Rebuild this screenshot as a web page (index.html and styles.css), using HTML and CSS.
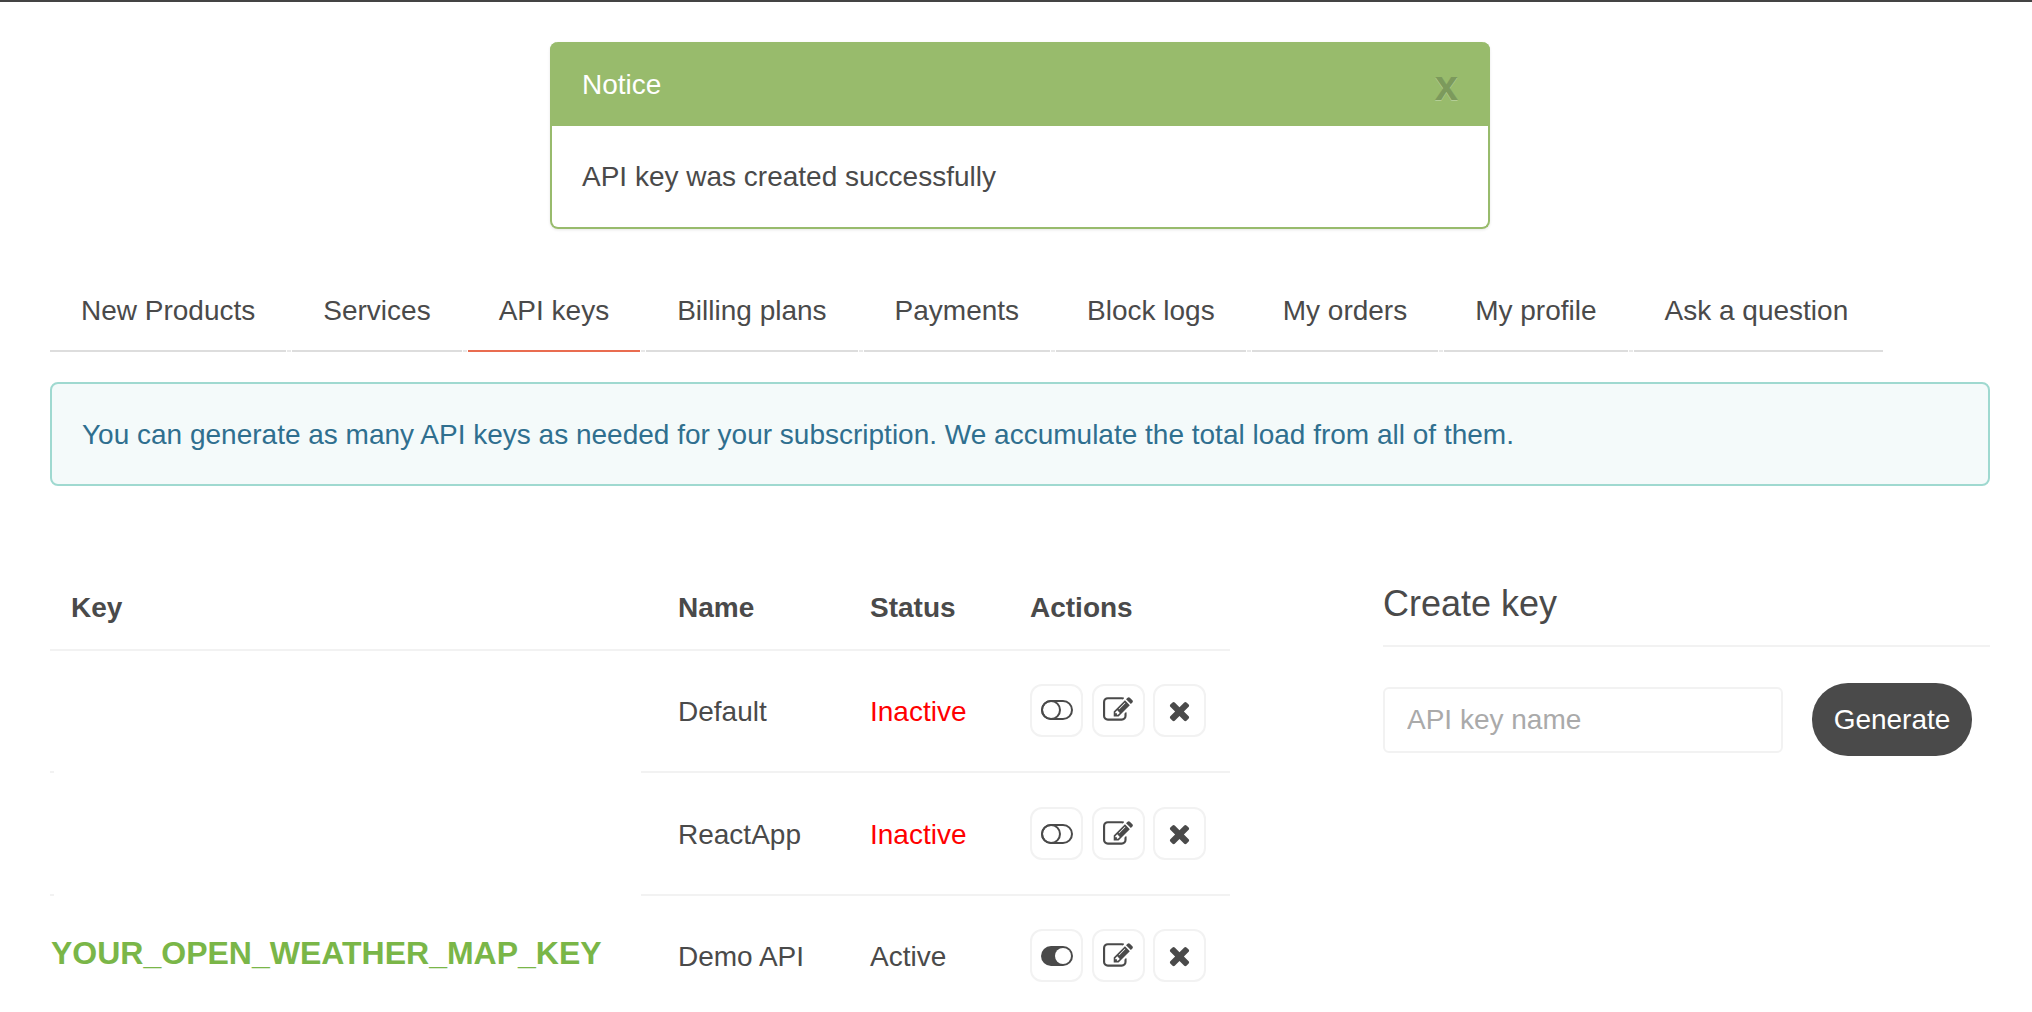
FILE: index.html
```html
<!DOCTYPE html>
<html lang="en">
<head>
<meta charset="utf-8">
<title>API keys</title>
<link rel="stylesheet" href="styles.css">
</head>
<body>
<svg class="sprite" width="0" height="0">
  <symbol id="i-edit" viewBox="0 0 1792 1792"><path d="M888 1184l116-116-152-152-116 116v56h96v96h56zm440-720q-16-16-33 1l-350 350q-17 17-1 33t33-1l350-350q17-17 1-33zm80 594v190q0 119-84.500 203.500t-203.500 84.500h-832q-119 0-203.500-84.500t-84.500-203.500v-832q0-119 84.500-203.500t203.500-84.500h832q63 0 117 25 15 7 18 23 3 17-9 29l-49 49q-14 14-32 8-23-6-45-6h-832q-66 0-113 47t-47 113v832q0 66 47 113t113 47h832q66 0 113-47t47-113v-126q0-13 9-22l64-64q15-15 35-7t20 29zm-96-738l288 288-672 672h-288v-288zm444 132l-92 92-288-288 92-92q28-28 68-28t68 28l152 152q28 28 28 68t-28 68z"/></symbol>
  <symbol id="i-times" viewBox="0 0 1792 1792"><path d="M1490 1322q0 40-28 68l-136 136q-28 28-68 28t-68-28l-294-294-294 294q-28 28-68 28t-68-28l-136-136q-28-28-28-68t28-68l294-294-294-294q-28-28-28-68t28-68l136-136q28-28 68-28t68 28l294 294 294-294q28-28 68-28t68 28l136 136q28 28 28 68t-28 68l-294 294 294 294q28 28 28 68z"/></symbol>
  <symbol id="i-off" viewBox="0 0 32 20"><rect x="1" y="1" width="30" height="18" rx="9" fill="none" stroke="#4a4a4a" stroke-width="2"/><circle cx="10" cy="10" r="9" fill="none" stroke="#4a4a4a" stroke-width="2"/></symbol>
  <symbol id="i-on" viewBox="0 0 32 20"><rect width="32" height="20" rx="10" fill="#4a4a4a"/><circle cx="22" cy="10" r="8" fill="#fff"/></symbol>
</svg>

<div class="notice">
  <div class="notice-head"><span>Notice</span><span class="notice-close">x</span></div>
  <div class="notice-body">API key was created successfully</div>
</div>

<ul class="tabs">
  <li>New Products</li>
  <li>Services</li>
  <li class="active">API keys</li>
  <li>Billing plans</li>
  <li>Payments</li>
  <li>Block logs</li>
  <li>My orders</li>
  <li>My profile</li>
  <li>Ask a question</li>
</ul>

<div class="info">You can generate as many API keys as needed for your subscription. We accumulate the total load from all of them.</div>

<div class="columns">
  <table class="keys">
    <tr>
      <th class="col-key">Key</th>
      <th class="col-name">Name</th>
      <th class="col-status">Status</th>
      <th>Actions</th>
    </tr>
    <tr>
      <td class="key"></td>
      <td>Default</td>
      <td class="inactive">Inactive</td>
      <td>
        <div class="actions">
          <button class="icon-btn"><svg class="ico-toggle"><use href="#i-off"/></svg></button>
          <button class="icon-btn"><svg class="ico-edit"><use href="#i-edit"/></svg></button>
          <button class="icon-btn"><svg class="ico-times"><use href="#i-times"/></svg></button>
        </div>
      </td>
    </tr>
    <tr>
      <td class="key"></td>
      <td>ReactApp</td>
      <td class="inactive">Inactive</td>
      <td>
        <div class="actions">
          <button class="icon-btn"><svg class="ico-toggle"><use href="#i-off"/></svg></button>
          <button class="icon-btn"><svg class="ico-edit"><use href="#i-edit"/></svg></button>
          <button class="icon-btn"><svg class="ico-times"><use href="#i-times"/></svg></button>
        </div>
      </td>
    </tr>
    <tr>
      <td class="key key-shown">YOUR_OPEN_WEATHER_MAP_KEY</td>
      <td>Demo API</td>
      <td>Active</td>
      <td>
        <div class="actions">
          <button class="icon-btn"><svg class="ico-toggle"><use href="#i-on"/></svg></button>
          <button class="icon-btn"><svg class="ico-edit"><use href="#i-edit"/></svg></button>
          <button class="icon-btn"><svg class="ico-times"><use href="#i-times"/></svg></button>
        </div>
      </td>
    </tr>
  </table>

  <div class="create">
    <h3 class="create-title">Create key</h3>
    <form class="create-form">
      <input class="create-input" type="text" placeholder="API key name">
      <button class="create-btn" type="button">Generate</button>
    </form>
  </div>
</div>
</body>
</html>
```

FILE: styles.css
```css
html {overflow: hidden;}
body {margin: 0; border-top: 2px solid #444; padding: 40px 42px 0 50px; font-family: "Liberation Sans", Arial, sans-serif; font-size: 28px; color: #4a4a4a; background: #fff;}
.sprite {position: absolute;}

.notice {width: 940px; margin: 0 0 0 500px; box-sizing: border-box; border: 2px solid #98bb6c; border-top: 0; border-radius: 8px; box-shadow: 0 1px 3px rgba(0,0,0,.1);}
.notice-head {height: 84px; margin: 0 -2px; padding: 0 32px; display: flex; justify-content: space-between; background: #98bb6c; color: #fff; line-height: 86px; border-radius: 8px 8px 0 0;}
.notice-close {font-size: 42px; line-height: 88px; font-weight: bold; color: #7c9a5c; text-shadow: 0 1px 0 rgba(255,255,255,.3);}
.notice-body {padding: 32px 30px; line-height: 37px;}

.tabs {list-style: none; display: flex; gap: 6px; margin: 33px 0 0; padding: 0;}
.tabs li {position: relative; padding: 30px 31px 21px; line-height: 37px; border-bottom: 2px solid #ddd;}
.tabs li:last-child {padding-right: 35px;}
.tabs li + li::before {content: ""; position: absolute; left: -5px; bottom: -2px; width: 4px; height: 2px; background: #e8e8e8;}
.tabs li.active {border-bottom-color: #e96c50;}

.info {margin-top: 30px; padding: 32px 30px 31px; line-height: 37px; border: 2px solid #9fd9d0; border-radius: 8px; background: #f4fafa; color: #2f6f8f;}

.columns {display: flex; margin-top: 64px;}
.keys {width: 1180px; border-collapse: separate; border-spacing: 0; table-layout: fixed;}
.keys th, .keys td {box-sizing: border-box; padding: 0 0 0 37px; text-align: left; border-bottom: 2px solid #f2f2f2;}
.keys th {height: 101px; padding-top: 17px; font-weight: bold;}
.keys td {height: 123px; padding-top: 2px;}
.keys tr:nth-child(2) td {height: 122px;}
.keys tr:last-child td {height: 119px; border-bottom: 0;}
.keys .col-key {width: 591px; padding-left: 21px;}
.keys .col-name {width: 192px;}
.keys .col-status {width: 160px;}
.keys td.key {padding: 0; border-bottom: 0; background: linear-gradient(#f2f2f2, #f2f2f2) left bottom / 4px 2px no-repeat;}
.keys td.key-shown {padding: 0 0 5px 1px; background: none; font-weight: bold; font-size: 32px; color: #7ab648; white-space: nowrap;}
.inactive {color: #f00;}

.actions {display: flex; gap: 8.5px; margin-bottom: 2px;}
.keys tr:nth-child(2) .actions {margin-bottom: 4px;}
.icon-btn {width: 53px; height: 53px; padding: 0; display: flex; align-items: center; justify-content: center; border: 2px solid #f2f2f2; border-radius: 12px; background: #fff; fill: #4a4a4a;}
.ico-toggle {width: 32px; height: 20px;}
.ico-edit {width: 30px; height: 30px; overflow: visible;}
.ico-times {width: 29px; height: 29px;}

.create {margin-left: 153px; width: 607px;}
.create-title {margin: 0; box-sizing: border-box; height: 97px; padding-top: 24px; line-height: 60px; font-size: 36px; font-weight: normal; border-bottom: 2px solid #f2f2f2;}
.create-form {display: flex; align-items: center; gap: 29px; margin-top: 36px;}
.create-input {width: 400px; height: 66px; box-sizing: border-box; padding: 0 22px; border: 2px solid #f2f2f2; border-radius: 6px; font: 28px "Liberation Sans", Arial, sans-serif; color: #4a4a4a;}
.create-input::placeholder {color: #aaa; opacity: 1;}
.create-btn {width: 160px; height: 73px; padding: 0; border: 0; border-radius: 36px; background: #4a4a4a; color: #fff; font: 28px "Liberation Sans", Arial, sans-serif;}
```
